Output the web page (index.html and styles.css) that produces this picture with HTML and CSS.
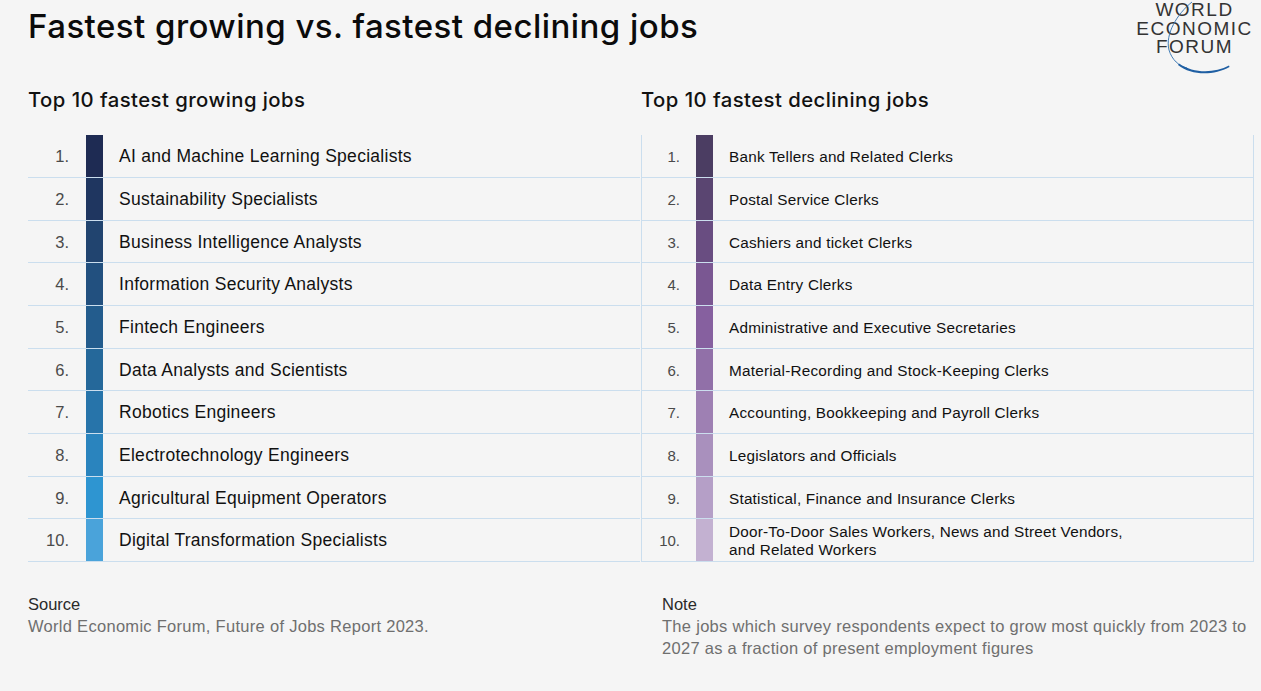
FILE: index.html
```html
<!DOCTYPE html>
<html lang="en">
<head>
<meta charset="utf-8">
<title>Fastest growing vs. fastest declining jobs</title>
<link rel="stylesheet" href="styles.css">
</head>
<body>
<div class="page">
  <header class="header">
    <h1 class="title">Fastest growing vs. fastest declining jobs</h1>
    <div class="logo">
      <div class="logo-line">WORLD</div>
      <div class="logo-line">ECONOMIC</div>
      <div class="logo-line">FORUM</div>
      <svg class="logo-arc" width="120" height="76" viewBox="1135 0 120 76" aria-hidden="true">
        <path d="M1193 2 C1178 14 1166 34 1170 50 C1173 60 1180 66 1188 68" fill="none" stroke="#2f6fae" stroke-width="0.9"/>
        <path d="M1180 63.5 C1195 74 1216 73 1230 65.5 L1230.5 67 C1215 75.5 1193 76 1179 65 Z" fill="#1f5fa3"/>
      </svg>
    </div>
  </header>

  <div class="columns">
    <section class="col">
      <h2 class="subtitle">Top 10 fastest growing jobs</h2>
      <div class="table table-grow">
        <div class="row"><span class="num">1.</span><span class="bar" style="background:#1e2b53"></span><span class="job">AI and Machine Learning Specialists</span></div>
        <div class="row"><span class="num">2.</span><span class="bar" style="background:#1f3660"></span><span class="job">Sustainability Specialists</span></div>
        <div class="row"><span class="num">3.</span><span class="bar" style="background:#21446f"></span><span class="job">Business Intelligence Analysts</span></div>
        <div class="row"><span class="num">4.</span><span class="bar" style="background:#22507f"></span><span class="job">Information Security Analysts</span></div>
        <div class="row"><span class="num">5.</span><span class="bar" style="background:#235c8d"></span><span class="job">Fintech Engineers</span></div>
        <div class="row"><span class="num">6.</span><span class="bar" style="background:#25689a"></span><span class="job">Data Analysts and Scientists</span></div>
        <div class="row"><span class="num">7.</span><span class="bar" style="background:#2774aa"></span><span class="job">Robotics Engineers</span></div>
        <div class="row"><span class="num">8.</span><span class="bar" style="background:#2a84be"></span><span class="job">Electrotechnology Engineers</span></div>
        <div class="row"><span class="num">9.</span><span class="bar" style="background:#2e95d1"></span><span class="job">Agricultural Equipment Operators</span></div>
        <div class="row"><span class="num">10.</span><span class="bar" style="background:#4aa3da"></span><span class="job">Digital Transformation Specialists</span></div>
      </div>
    </section>

    <section class="col">
      <h2 class="subtitle">Top 10 fastest declining jobs</h2>
      <div class="table table-decline">
        <div class="row"><span class="num">1.</span><span class="bar" style="background:#4b3d62"></span><span class="job">Bank Tellers and Related Clerks</span></div>
        <div class="row"><span class="num">2.</span><span class="bar" style="background:#5a4571"></span><span class="job">Postal Service Clerks</span></div>
        <div class="row"><span class="num">3.</span><span class="bar" style="background:#694d81"></span><span class="job">Cashiers and ticket Clerks</span></div>
        <div class="row"><span class="num">4.</span><span class="bar" style="background:#7a5792"></span><span class="job">Data Entry Clerks</span></div>
        <div class="row"><span class="num">5.</span><span class="bar" style="background:#86609f"></span><span class="job">Administrative and Executive Secretaries</span></div>
        <div class="row"><span class="num">6.</span><span class="bar" style="background:#9170a8"></span><span class="job">Material-Recording and Stock-Keeping Clerks</span></div>
        <div class="row"><span class="num">7.</span><span class="bar" style="background:#9e80b3"></span><span class="job">Accounting, Bookkeeping and Payroll Clerks</span></div>
        <div class="row"><span class="num">8.</span><span class="bar" style="background:#a990bd"></span><span class="job">Legislators and Officials</span></div>
        <div class="row"><span class="num">9.</span><span class="bar" style="background:#b59fc7"></span><span class="job">Statistical, Finance and Insurance Clerks</span></div>
        <div class="row"><span class="num">10.</span><span class="bar" style="background:#c3b1d1"></span><span class="job">Door-To-Door Sales Workers, News and Street Vendors,<br>and Related Workers</span></div>
      </div>
    </section>
  </div>

  <footer class="footer">
    <div class="foot foot-source">
      <div class="foot-label">Source</div>
      <div class="foot-text">World Economic Forum, Future of Jobs Report 2023.</div>
    </div>
    <div class="foot foot-note">
      <div class="foot-label">Note</div>
      <div class="foot-text">The jobs which survey respondents expect to grow most quickly from 2023 to 2027 as a fraction of present employment figures</div>
    </div>
  </footer>
</div>
</body>
</html>
```

FILE: styles.css
```css
* { box-sizing: border-box; }

html, body {
  margin: 0;
  padding: 0;
  background: #f5f5f5;
}

body {
  font-family: "Liberation Sans", Arial, Helvetica, sans-serif;
  color: #111;
}

.page {
  width: 1261px;
  height: 691px;
  padding: 0 7px 0 28px;
}

.header {
  display: flex;
  justify-content: space-between;
  align-items: flex-start;
}

.title {
  margin: 6px 0 0 0;
  font-family: Inter, "Liberation Sans", Arial, sans-serif;
  font-size: 33px;
  line-height: 40px;
  font-weight: 500;
  color: #0b0b0b;
  letter-spacing: 0.46px;
}

.logo {
  position: relative;
  width: 120px;
  height: 76px;
  margin-top: 1px;
  text-align: center;
  color: #333;
  font-size: 19px;
  line-height: 18.7px;
  letter-spacing: 1.5px;
}

.logo-line {
  padding-left: 1px;
}

.logo-arc {
  position: absolute;
  left: 0;
  top: -1px;
}

.columns {
  display: grid;
  grid-template-columns: 613px 613px;
  margin-top: 11px;
}

.subtitle {
  margin: 0 0 23.3px 0;
  font-family: Inter, "Liberation Sans", Arial, sans-serif;
  font-size: 20.3px;
  line-height: 24px;
  font-weight: 500;
  letter-spacing: 0.45px;
  color: #111;
}

.table {
  display: flex;
  flex-direction: column;
}

.row {
  display: flex;
  align-items: stretch;
  height: 42.7px;
  border-bottom: 1px solid #cbdeee;
}

.num {
  display: flex;
  align-items: center;
  justify-content: flex-end;
  color: #4a4a4a;
  padding-top: 1px;
}

.bar {
  flex: 0 0 17px;
}

.job {
  display: flex;
  align-items: center;
  padding-top: 1px;
}

.table-grow {
  width: 612px;
}

.table-grow .num {
  width: 41px;
  margin-right: 17px;
  font-size: 16.5px;
}

.table-grow .job {
  margin-left: 16px;
  font-size: 17.5px;
  letter-spacing: 0.28px;
  color: #111;
}

.table-decline {
  width: 613px;
  border-left: 1px solid #cbdeee;
  border-right: 1px solid #cbdeee;
}

.table-decline .num {
  width: 38px;
  margin-right: 16px;
  font-size: 15px;
}

.table-decline .job {
  margin-left: 16px;
  font-size: 15.3px;
  line-height: 18px;
  letter-spacing: 0.22px;
  color: #111;
  padding-top: 2px;
}

.footer {
  display: grid;
  grid-template-columns: 634px 592px;
  margin-top: 31px;
}

.foot {
  font-size: 16.5px;
  line-height: 22px;
}

.foot-label {
  color: #2a2a2a;
}

.foot-text {
  color: #6f6f6f;
  letter-spacing: 0.29px;
}
```
